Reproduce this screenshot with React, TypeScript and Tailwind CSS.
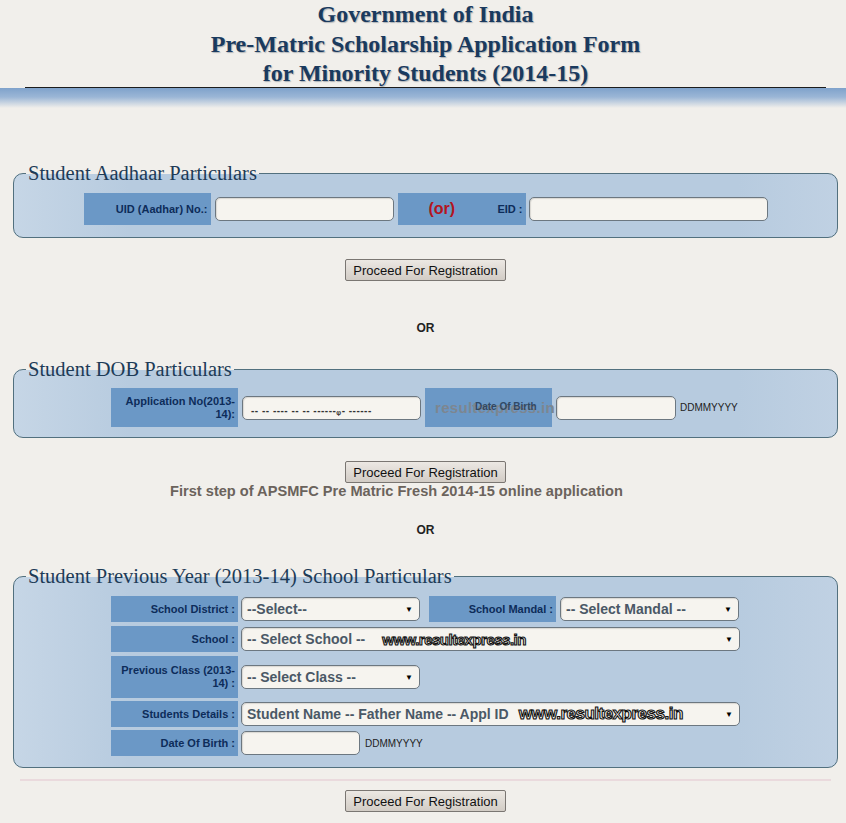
import type { ReactNode } from "react"

const sans = "font-['Liberation_Sans',Arial,sans-serif]"
const serif = "font-['Liberation_Serif','Times_New_Roman',serif]"

function LabelCell({ children, className = "" }: { children: ReactNode; className?: string }) {
  return (
    <div
      className={`w-[127px] h-full shrink-0 bg-[#6b98c6] flex items-center justify-end pr-[3px] text-right text-[11px] leading-[13px] font-bold text-[#0d2c5a] ${sans} ${className}`}
    >
      {children}
    </div>
  )
}

function Box({ className = "", children }: { className?: string; children?: ReactNode }) {
  return (
    <div
      className={`h-[24px] shrink-0 rounded-[5px] border border-[#6c7780] bg-[#f6f4ef] shadow-[inset_1px_1px_1px_rgba(0,0,0,0.12)] ${className}`}
    >
      {children}
    </div>
  )
}

function Select({ text, className = "", mark }: { text: string; className?: string; mark?: ReactNode }) {
  return (
    <Box className={`flex items-center pl-[5px] pr-[6px] ${className}`}>
      <span className={`text-[14px] font-bold text-[#4a5866] whitespace-nowrap ${sans}`}>{text}</span>
      {mark}
      <span className="ml-auto text-[8px] text-black">▼</span>
    </Box>
  )
}

function Watermark({ size }: { size: string }) {
  return (
    <span
      className={`${size} font-bold tracking-[-0.5px] text-[#f4f2ec] [-webkit-text-stroke:1.1px_#111] whitespace-nowrap ${sans}`}
    >
      www.resultexpress.in
    </span>
  )
}

function ProceedButton() {
  return (
    <div className="flex justify-center">
      <button
        className={`h-[22px] px-[7px] border border-[#7a7672] rounded-[2px] bg-[linear-gradient(#ece8e3,#d2ccc5)] text-[13px] leading-none text-[#111] ${sans}`}
      >
        Proceed For Registration
      </button>
    </div>
  )
}

function Section({ title, children, className = "" }: { title: string; children: ReactNode; className?: string }) {
  return (
    <fieldset
      className={`border border-[#52707e] rounded-[10px] bg-[linear-gradient(to_right,#c6d6e6,#b7cbdf_14%,#b7cbdf_88%,#c0d1e3)] ${className}`}
    >
      <legend className={`ml-[12px] px-[2px] text-[20.5px] leading-[24px] text-[#1d3b57] ${serif}`}>{title}</legend>
      {children}
    </fieldset>
  )
}

function Or({ className = "" }: { className?: string }) {
  return <div className={`text-center text-[12px] leading-[14px] font-bold text-[#222] ${sans} ${className}`}>OR</div>
}

export default function App() {
  return (
    <div className="min-h-[823px] bg-[#f1efeb] pb-[12px]">
      {/* Title */}
      <div className="pl-[13px] pr-[8px]">
        <div
          className={`h-[87px] text-center text-[24px] leading-[29.5px] font-bold text-[#1a3a5e] [text-shadow:1px_1px_1px_rgba(110,120,130,0.5)] ${serif}`}
        >
          <div>Government of India</div>
          <div>Pre-Matric Scholarship Application Form</div>
          <div>for Minority Students (2014-15)</div>
        </div>
        <div className="mx-[12px] h-px bg-[#1c1c1c]" />
      </div>
      <div className="h-[20px] bg-[linear-gradient(#7fa2cb,#9bb6d6_45%,#f1efeb)]" />

      <div className="pl-[13px] pr-[8px]">
        {/* Aadhaar */}
        <Section title="Student Aadhaar Particulars" className="mt-[53px] pt-[8px] pb-[12px]">
          <div className="flex justify-center items-center h-[32px]">
            <LabelCell>UID (Aadhar) No.:</LabelCell>
            <Box className="ml-[4px] w-[179px]" />
            <div className={`ml-[4px] w-[128px] h-full bg-[#6b98c6] flex items-center pl-[31px] pr-[3px] ${sans}`}>
              <span className="text-[16px] font-bold text-[#b3141d]">(or)</span>
              <span className="ml-auto text-[11px] font-bold text-[#0d2c5a]">EID :</span>
            </div>
            <Box className="ml-[3px] w-[239px]" />
          </div>
        </Section>

        <div className="mt-[21px]">
          <ProceedButton />
        </div>

        <Or className="mt-[40px]" />

        {/* DOB */}
        <Section title="Student DOB Particulars" className="mt-[22px] pt-[7px] pb-[10px]">
          <div className="flex justify-center items-center h-[39px]">
            <LabelCell>
              Application No(2013-
              <br />
              14):
            </LabelCell>
            <Box className="ml-[4px] w-[179px] flex items-end pl-[8px] pb-[3px]">
              <span className={`text-[10px] leading-none font-bold tracking-[0.5px] text-[#333] ${sans}`}>
                -- -- ---- -- -- ------ᵩ- ------
              </span>
            </Box>
            <div className={`ml-[4px] w-[127px] h-full bg-[#6b98c6] flex items-center pl-[10px] ${sans}`}>
              <div className="relative">
                <span className="text-[15px] font-bold text-[#7d8690] tracking-[0.3px]">resultexpress.in</span>
                <span className="absolute left-[40px] top-[3px] text-[10px] font-bold text-[#23364f] opacity-80 whitespace-nowrap">
                  Date Of Birth
                </span>
              </div>
            </div>
            <Box className="ml-[4px] w-[120px]" />
            <span className={`ml-[4px] w-[60px] text-[10px] text-[#222] ${sans}`}>DDMMYYYY</span>
          </div>
        </Section>

        <div className="mt-[23px]">
          <ProceedButton />
        </div>
        <div className={`pr-[58px] text-center text-[14.6px] leading-[16px] font-bold text-[#6b635c] ${sans}`}>
          First step of APSMFC Pre Matric Fresh 2014-15 online application
        </div>

        <Or className="mt-[24px]" />

        {/* Previous year school */}
        <Section title="Student Previous Year (2013-14) School Particulars" className="mt-[27px] pt-[8px] pb-[11px]">
          <div className="w-[629px] mx-auto flex flex-col">
            <div className="flex items-center h-[26px]">
              <LabelCell>School District :</LabelCell>
              <Select text="--Select--" className="ml-[3px] w-[179px]" />
              <LabelCell className="ml-[9px]">School Mandal :</LabelCell>
              <Select text="-- Select Mandal --" className="ml-[4px] w-[179px]" />
            </div>
            <div className="flex items-center h-[26px] mt-[4px]">
              <LabelCell>School :</LabelCell>
              <Select
                text="-- Select School --"
                className="ml-[3px] w-[499px]"
                mark={
                  <span className="ml-[17px]">
                    <Watermark size="text-[15px]" />
                  </span>
                }
              />
            </div>
            <div className="flex items-center h-[42px] mt-[4px]">
              <LabelCell>
                Previous Class (2013-
                <br />
                14) :
              </LabelCell>
              <Select text="-- Select Class --" className="ml-[3px] w-[179px]" />
            </div>
            <div className="flex items-center h-[26px] mt-[3px]">
              <LabelCell>Students Details :</LabelCell>
              <Select
                text="Student Name -- Father Name -- Appl ID"
                className="ml-[3px] w-[499px]"
                mark={
                  <span className="ml-[10px]">
                    <Watermark size="text-[17px]" />
                  </span>
                }
              />
            </div>
            <div className="flex items-center h-[26px] mt-[3px]">
              <LabelCell>Date Of Birth :</LabelCell>
              <Box className="ml-[3px] w-[119px]" />
              <span className={`ml-[5px] text-[10px] text-[#222] ${sans}`}>DDMMYYYY</span>
            </div>
          </div>
        </Section>

        <div className="mt-[11px] mx-[7px] h-[2px] bg-[#eadadd]" />

        <div className="mt-[9px]">
          <ProceedButton />
        </div>
      </div>
    </div>
  )
}
